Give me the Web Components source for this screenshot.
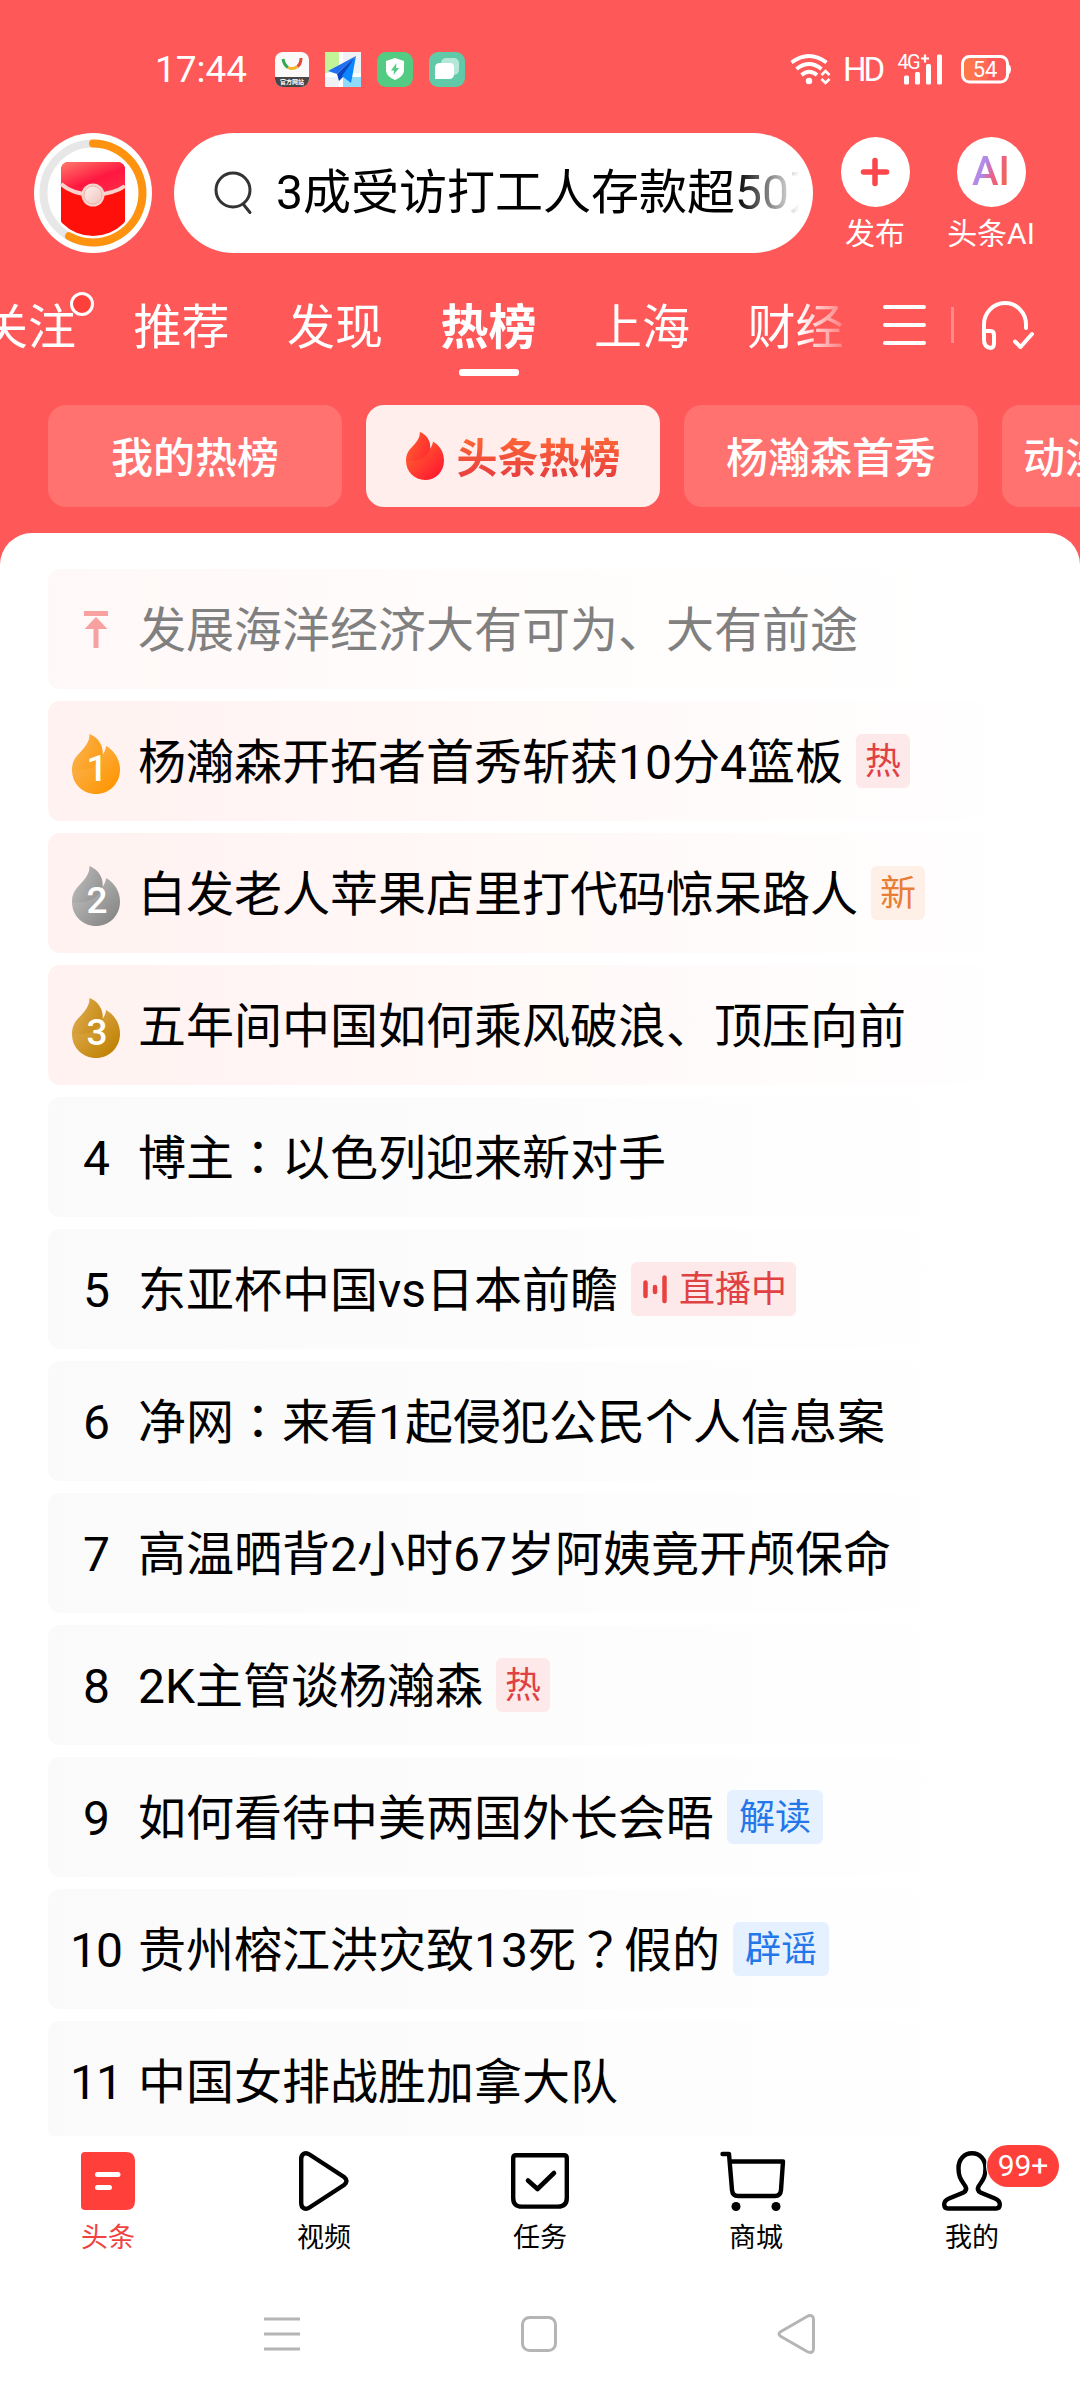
<!DOCTYPE html>
<html lang="zh-CN">
<head>
<meta charset="utf-8">
<title>头条热榜</title>
<style>
    html, body {
        margin: 0;
        padding: 0;
    }
    body {
        width: 1080px;
        height: 2400px;
        overflow: hidden;
        background-color: #FFF;
        font-family: Roboto, "Noto Sans CJK SC", sans-serif;
        color: #000;
    }
</style>
</head>
<body>
<hot-app></hot-app>

<script>
/**
 * Shared base: attaches an open shadow root and fills it
 */
class BaseElement extends HTMLElement {
    connectedCallback() {
        this.root = this.attachShadow({mode: 'open'});
        this.root.innerHTML = `<style>${this.style_}</style>${this.template}`;
    }
}

/**
 * Inline SVG icons, [width, height, markup]
 */
const ICONS = {
    store: [34, 35, `
        <clipPath id="c"><rect width="34" height="35" rx="8"/></clipPath>
        <g clip-path="url(#c)">
            <rect width="34" height="35" fill="#FAFAFA"/>
            <rect y="25" width="34" height="10" fill="#4A4545"/>
            <path d="M8 7Q9 13 13 15.500" stroke="#2FA84F" stroke-width="3" fill="none"/>
            <path d="M13 15.500Q18 18 22.500 14.500" stroke="#F2B632" stroke-width="3" fill="none"/>
            <path d="M22.500 14.500Q26 12 26 6" stroke="#E24A3B" stroke-width="3" fill="none"/>
            <text x="17" y="32" font-size="6" font-weight="700" text-anchor="middle" fill="#FFF">官方网站</text>
        </g>`],
    map: [36, 35, `
        <rect width="36" height="35" fill="#EEF2F7"/>
        <path d="M0 0H14V13L0 22Z" fill="#C1F597"/>
        <path d="M16 0V35M0 23H36" stroke="#FFF" stroke-width="4"/>
        <path d="M18 25H36V35H18Z" fill="#8EDBFC"/>
        <path d="M31 4L3 19L12 22Z" fill="#1F6FF0"/>
        <path d="M31 4L12 22L14 29L18 25Z" fill="#0B46C4"/>
        <path d="M31 4L17 24L26 31Z" fill="#0A86FF"/>`],
    shield: [36, 35, `
        <rect width="36" height="35" rx="9" fill="#53CB83"/>
        <path d="M18 6L27 9V19Q26 25 18 28Q10 25 9 19V9Z" fill="#FFF"/>
        <path d="M19.500 11L14 18.500H17L16.500 23L22 16H19Z" fill="#53CB83"/>`],
    cards: [36, 35, `
        <rect width="36" height="35" rx="9" fill="#5FC9A8"/>
        <rect x="12" y="6" width="18" height="17" rx="5" fill="#B5E7D8"/>
        <path d="M11 11H21Q25 11 25 15V22Q25 27 20 27H6V16Q6 11 11 11Z" fill="#FFF"/>`],
    wifi: [40, 31, `
        <g fill="none" stroke="#FFF" stroke-width="3.800">
            <path d="M1.500 8.500Q19 -4.500 36.500 8.500"/>
            <path d="M6.500 15Q19 5 31.500 15"/>
            <path d="M11.500 21Q19 14.500 27 21"/>
            <path d="M31.500 21L35.500 17L39.500 21M31.500 25L35.500 29L39.500 25" stroke-width="2.600"/>
        </g>
        <circle cx="19" cy="27" r="3.200" fill="#FFF"/>`],
    signal: [46, 31, `
        <g fill="#FFF">
            <rect x="7" y="21.500" width="5" height="9" rx="1.500"/>
            <rect x="18" y="18" width="5" height="12.500" rx="1.500"/>
            <rect x="29" y="10" width="5" height="20.500" rx="1.500"/>
            <rect x="40" y="0.500" width="5" height="30" rx="1.500"/>
            <text x="0.500" y="14.500" font-size="20" textLength="23">4G</text>
            <path d="M24 4.500H32M28 0.500V8.500" stroke="#FFF" stroke-width="2.200"/>
        </g>`],
    battery: [50, 29, `
        <defs><linearGradient id="g"><stop offset="0" stop-color="#FF7B45"/><stop offset="1" stop-color="#FF7B55" stop-opacity=".5"/></linearGradient></defs>
        <rect x="1.500" y="2" width="26" height="24" rx="6" fill="url(#g)"/>
        <rect x="1.500" y="1.500" width="45" height="25.500" rx="7" fill="none" stroke="#FFF" stroke-width="3"/>
        <path d="M47.500 9Q50 10.500 50 14Q50 18 47.500 19.500Z" fill="#FFF"/>
        <text x="24" y="21.500" font-size="22" text-anchor="middle" fill="#FFF">54</text>`],
    packet: [118, 120, `
        <defs>
            <linearGradient id="top" x1="0" y1="0" x2=".75" y2="1">
                <stop offset="0" stop-color="#FF7A6B"/><stop offset=".6" stop-color="#FF1740"/><stop offset="1" stop-color="#FF2A48"/>
            </linearGradient>
            <linearGradient id="seal" x1="0" y1="0" x2="1" y2="1">
                <stop offset="0" stop-color="#FFF0EC"/><stop offset="1" stop-color="#EFC5BF"/>
            </linearGradient>
            <clipPath id="cp"><circle cx="59" cy="60" r="43"/></clipPath>
        </defs>
        <ellipse cx="59" cy="60" rx="59" ry="60" fill="#FFF"/>
        <circle cx="59" cy="60" r="49.500" fill="none" stroke="#E7E7E7" stroke-width="8"/>
        <path d="M59 10.500A49.500 49.500 0 1 1 35 103.300" fill="none" stroke="#FF930F" stroke-width="8" stroke-linecap="round"/>
        <g clip-path="url(#cp)">
            <rect x="27" y="29" width="64" height="80" rx="8" fill="#FF100A"/>
            <path d="M27 51V37Q27 29 35 29H83Q91 29 91 37V51Q80 61 59 62Q38 61 27 51Z" fill="url(#top)"/>
            <path d="M27 51Q38 61 59 62Q80 61 91 53" fill="none" stroke="#F8D3CD" stroke-width="4"/>
        </g>
        <circle cx="59" cy="62" r="11.500" fill="#F7D3CC"/>
        <circle cx="59" cy="62" r="9" fill="url(#seal)" stroke="#E9B5AE" stroke-width="1"/>`],
    search: [38, 44, `
        <g fill="none" stroke="#333" stroke-width="3" stroke-linecap="round">
            <circle cx="19" cy="19" r="17"/><path d="M29.500 33.500L36 41.500"/>
        </g>`],
    plus: [30, 30, `<path d="M15 3.500V26.500M3.500 15H26.500" stroke="#F9474B" stroke-width="5.500" stroke-linecap="round"/>`],
    menu: [43, 42, `<path d="M2 3H41M2 21H41M2 39H41" stroke="#FFF" stroke-width="4" stroke-linecap="round"/>`],
    headphone: [52, 50, `
        <g fill="none" stroke="#FFF" stroke-width="4" stroke-linecap="round" stroke-linejoin="round">
            <path d="M2 30V23.500A21 21.500 0 0 1 44 23.500V27"/>
            <path d="M2 30H8.500Q12 30 12 34V42Q12 47 8.500 47Q2 46 2 39Z"/>
            <path d="M33 40.500L38.500 46L50 33"/>
        </g>`],
    flame: [48, 60, `
        <defs>
            <linearGradient id="f" x1="0" y1="0" x2=".8" y2="1">
                <stop offset="0" stop-color="var(--flame-a)"/><stop offset="1" stop-color="var(--flame-b)"/>
            </linearGradient>
            <linearGradient id="s" x1="0" y1="0" x2="1" y2="0">
                <stop offset="0" stop-color="var(--flame-b)" stop-opacity=".1"/><stop offset="1" stop-color="var(--flame-b)" stop-opacity=".5"/>
            </linearGradient>
        </defs>
        <path d="M17.500 0C27 4 31.500 12 30.500 21C32.500 18 34 15 34 12C43 17 48 26 48 35.500C48 50 37 60 24 60S0 50 0 36C0 23 8 20 13.500 12C17 7 17.500 4 17.500 0Z" fill="url(#f)"/>
        <path d="M0 36C14 38 27 33 30.500 21C31.500 12 27 4 17.500 0C17.500 4 17 7 13.500 12C8 20 0 23 0 36Z" fill="url(#s)"/>`],
    top: [24, 37, `<path d="M0 0H24V5H0ZM12 6L23.500 18H14.500V37H9.500V18H0.500Z" fill="#F9A0A1"/>`],
    live: [24, 28, `<path d="M2.500 7.500V21M12 12V17M21.500 2.500V26" stroke="#E9413F" stroke-width="4.500" stroke-linecap="round"/>`],
    home: [54, 58, `
        <path d="M4 0H45Q54 0 54 9V49Q54 58 45 58H4Q0 58 0 54V4Q0 0 4 0Z" fill="#FF403A"/>
        <path d="M16.500 22.500H37M16.500 35.500H28.500" stroke="#FFF" stroke-width="5" stroke-linecap="round"/>`],
    video: [50, 60, `<path d="M2.200 8C2.200 2.500 6.500 .800 10.500 3.500L45 26Q50 30 45 34L10.500 56.500C6.500 59.200 2.200 57.500 2.200 52Z" fill="none" stroke="#000" stroke-width="4.400"/>`],
    task: [58, 56, `
        <path d="M5 2.200H53Q55.800 2.200 55.800 5V45Q55.800 53.600 47 53.600H11Q2.200 53.600 2.200 45V5Q2.200 2.200 5 2.200Z" fill="none" stroke="#000" stroke-width="4.400"/>
        <path d="M17 27.500L26.500 36L43 20" fill="none" stroke="#000" stroke-width="4.600" stroke-linecap="round" stroke-linejoin="round"/>`],
    cart: [72, 60, `
        <g fill="none" stroke="#000" stroke-width="4.400" stroke-linecap="round" stroke-linejoin="round">
            <path d="M2.500 3H9L12 39Q12.500 45 18 45H55Q60.500 45 61 39L63 10.500H10"/>
        </g>
        <circle cx="16" cy="55.500" r="4.500"/><circle cx="56" cy="55.500" r="4.500"/>`],
    user: [60, 60, `<path d="M30 2.200C22 2.200 16.500 8.500 16.500 17C16.500 27 19.500 29 23.500 35.500Q25.500 39 21.500 41.500L7 47.500Q2.200 49.500 2.200 53.500Q2.200 57.500 6 57.500H54Q57.800 57.500 57.800 53.500Q57.800 49.500 53 47.500L38.500 41.500Q34.500 39 36.500 35.500C40.500 29 43.500 27 43.500 17C43.500 8.500 38 2.200 30 2.200Z" fill="none" stroke="#000" stroke-width="4.400"/>`],
    recent: [36, 34, `<path d="M0 2H36M0 17H36M0 32H36" stroke="#B5B5B5" stroke-width="3"/>`],
    square: [36, 36, `<rect x="1.500" y="1.500" width="33" height="33" rx="7" fill="none" stroke="#B5B5B5" stroke-width="3"/>`],
    back: [38, 40, `<path d="M30 2.500C34 .500 36.500 2 36.500 5.500V34.500C36.500 38 34 39.500 30 37.500L4 22.500Q0 20 4 17.500Z" fill="none" stroke="#B5B5B5" stroke-width="3"/>`]
};

class HotIcon extends BaseElement {
    get style_() {
        return `
            :host { display: block; flex: none; line-height: 0; }
            svg { display: block; overflow: visible; }
        `;
    }
    get template() {
        const [w, h, body] = ICONS[this.getAttribute('name')];
        const width = this.getAttribute('width') || w;
        const height = this.getAttribute('height') || h;
        return `<svg width="${width}" height="${height}" viewBox="0 0 ${w} ${h}" preserveAspectRatio="none">${body}</svg>`;
    }
}
customElements.define('hot-icon', HotIcon);

/**
 * Phone status bar
 */
class StatusBar extends BaseElement {
    get style_() {
        return `
            :host {
                display: flex;
                align-items: center;
                justify-content: space-between;
                height: 69px;
                padding: 35px 69px 0 155px;
                color: #FFF;
            }
            div { display: flex; align-items: center; }
            .time { font-size: 37px; width: 120px; line-height: 40px; }
            .apps { gap: 16px; }
            .right hot-icon:nth-of-type(1) { margin-right: 13px; }
            .hd { font-size: 33px; line-height: 40px; width: 54px; letter-spacing: -3px; }
            .right hot-icon:nth-of-type(2) { margin-right: 18px; }
        `;
    }
    get template() {
        return `
            <div>
                <span class='time'>17:44</span>
                <div class='apps'>
                    <hot-icon name='store'></hot-icon>
                    <hot-icon name='map'></hot-icon>
                    <hot-icon name='shield'></hot-icon>
                    <hot-icon name='cards'></hot-icon>
                </div>
            </div>
            <div class='right'>
                <hot-icon name='wifi'></hot-icon>
                <span class='hd'>HD</span>
                <hot-icon name='signal'></hot-icon>
                <hot-icon name='battery'></hot-icon>
            </div>
        `;
    }
}
customElements.define('status-bar', StatusBar);

/**
 * Round button with a caption under it
 */
class RoundAction extends BaseElement {
    get style_() {
        return `
            :host { display: flex; flex-direction: column; align-items: center; width: 116px; color: #FFF; }
            .circle {
                display: flex;
                align-items: center;
                justify-content: center;
                width: 69px;
                height: 70px;
                border-radius: 50%;
                background-color: #FFF;
            }
            .label { margin-top: 9px; font-size: 30px; line-height: 36px; white-space: nowrap; }
        `;
    }
    get template() {
        return `
            <div class='circle'><slot></slot></div>
            <div class='label'>${this.getAttribute('label')}</div>
        `;
    }
}
customElements.define('round-action', RoundAction);

/**
 * Red packet, search box and actions
 */
class SearchHeader extends BaseElement {
    get style_() {
        return `
            :host { display: flex; height: 120px; padding: 29px 0 0 34px; }
            .box {
                display: flex;
                align-items: center;
                box-sizing: border-box;
                width: 639px;
                height: 120px;
                margin-left: 22px;
                padding: 0 14px 0 40px;
                border-radius: 60px;
                background-color: #FFF;
            }
            .query {
                flex: 1;
                margin-left: 24px;
                font-size: 48px;
                line-height: 60px;
                white-space: nowrap;
                overflow: hidden;
                -webkit-mask-image: linear-gradient(to right, #000 460px, transparent 524px);
                mask-image: linear-gradient(to right, #000 460px, transparent 524px);
            }
            .actions { display: flex; padding-top: 4px; margin-left: 4px; }
            .ai {
                font-size: 40px;
                line-height: 44px;
                font-weight: 500;
                background: linear-gradient(110deg, #F57BC0 10%, #A78DF0 32%, #EC5F8A 55%, #F0694A 90%);
                -webkit-background-clip: text;
                background-clip: text;
                color: transparent;
            }
        `;
    }
    get template() {
        return `
            <hot-icon name='packet'></hot-icon>
            <div class='box'>
                <hot-icon name='search'></hot-icon>
                <div class='query'>3成受访打工人存款超50万</div>
            </div>
            <div class='actions'>
                <round-action label='发布'><hot-icon name='plus'></hot-icon></round-action>
                <round-action label='头条AI'><span class='ai'>AI</span></round-action>
            </div>
        `;
    }
}
customElements.define('search-header', SearchHeader);

/**
 * Channel tabs
 */
class ChannelTabs extends BaseElement {
    get style_() {
        return `
            :host { display: flex; height: 129px; margin-top: 12px; color: #FFF; }
            .scroll {
                display: flex;
                gap: 57.500px;
                width: 848px;
                overflow: hidden;
                -webkit-mask-image: linear-gradient(to right, #000 800px, transparent 856px);
                mask-image: linear-gradient(to right, #000 800px, transparent 856px);
            }
            .tab {
                position: relative;
                flex: none;
                padding-top: 33px;
                font-size: 48px;
                line-height: 60px;
            }
            .tab:first-child { margin-left: -20px; }
            .active { font-weight: 700; }
            .active::after {
                content: '';
                display: block;
                width: 60px;
                height: 7px;
                margin: 11px auto 0;
                border-radius: 3px;
                background-color: #FFF;
            }
            .dot {
                position: absolute;
                right: -18px;
                top: 27px;
                width: 18px;
                height: 18px;
                border: 3px solid #FFF;
                border-radius: 50%;
                background-color: #FF403A;
            }
            .tools { display: flex; padding-top: 39px; margin-left: 35px; }
            .line { width: 3px; height: 36px; margin: 3px 28px 0 25px; background-color: rgba(255, 255, 255, .3); }
            .tools hot-icon:last-child { margin-top: -3px; }
        `;
    }
    get template() {
        return `
            <div class='scroll'>
                <div class='tab'>关注<span class='dot'></span></div>
                <div class='tab'>推荐</div>
                <div class='tab'>发现</div>
                <div class='tab active'>热榜</div>
                <div class='tab'>上海</div>
                <div class='tab'>财经</div>
            </div>
            <div class='tools'>
                <hot-icon name='menu'></hot-icon>
                <div class='line'></div>
                <hot-icon name='headphone'></hot-icon>
            </div>
        `;
    }
}
customElements.define('channel-tabs', ChannelTabs);

/**
 * Board chip, the selected one carries a flame
 */
class BoardChip extends BaseElement {
    get style_() {
        return `
            :host {
                --flame-a: #FF7A30;
                --flame-b: #FF1730;
                display: flex;
                flex: none;
                align-items: center;
                justify-content: center;
                box-sizing: border-box;
                width: 294px;
                height: 102px;
                border-radius: 18px;
                background-color: #FF7270;
                color: #FFF;
                font-size: 42px;
                font-weight: 500;
                line-height: 60px;
                white-space: nowrap;
            }
            .text { padding-top: 5px; }
            :host([selected]) { background-color: #FFEEEC; font-size: 41px; font-weight: 700; }
            :host([selected]) .text {
                margin-left: 13px;
                background: linear-gradient(to bottom, #FF6A35 15%, #E8403F 80%);
                -webkit-background-clip: text;
                background-clip: text;
                color: transparent;
            }
        `;
    }
    get template() {
        const flame = this.hasAttribute('selected') ? `<hot-icon name='flame' width='38' height='48'></hot-icon>` : '';
        return `${flame}<span class='text'><slot></slot></span>`;
    }
}
customElements.define('board-chip', BoardChip);

/**
 * Small label after a title
 */
class HotTag extends BaseElement {
    get style_() {
        return `
            :host {
                display: flex;
                flex: none;
                align-items: center;
                box-sizing: border-box;
                height: 54px;
                margin-left: 13px;
                padding: 2px 9px 0;
                border-radius: 6px;
                font-size: 36px;
                line-height: 50px;
                color: #E04143;
                background-color: #FDE9EA;
            }
            :host([type=new]) { color: #E87D35; background-color: #FFF0E7; }
            :host([type=info]) { padding: 2px 12px 0; color: #2377E8; background-color: #E6F1FF; }
            :host([type=live]) { padding: 2px 9px 0 12px; }
            hot-icon { margin: -2px 12px 0 0; }
        `;
    }
    get template() {
        const live = this.getAttribute('type') === 'live' ? `<hot-icon name='live'></hot-icon>` : '';
        return `${live}<slot></slot>`;
    }
}
customElements.define('hot-tag', HotTag);

/**
 * One line of the board
 */
class HotRow extends BaseElement {
    get style_() {
        return `
            :host {
                display: flex;
                flex: none;
                align-items: center;
                height: 120px;
                padding-left: 6px;
                border-radius: 12px;
                background: linear-gradient(to right, #FAFAFA, #FFF);
                font-size: 48px;
                line-height: 60px;
                white-space: nowrap;
            }
            :host([rank="1"]), :host([rank="2"]), :host([rank="3"]) {
                background: linear-gradient(to right, #FFF2F1, #FFF9F8 50%, #FFF);
            }
            :host([rank="1"]) { --flame-a: #F8BD6C; --flame-b: #FF9500; }
            :host([rank="2"]) { --flame-a: #CFCFCF; --flame-b: #858585; }
            :host([rank="3"]) { --flame-a: #E9BB6C; --flame-b: #BF7F00; }
            :host([rank=top]) { background: linear-gradient(to right, #FFF8F8, #FFFDFC 50%, #FFF); }
            :host([rank=top]) .title { color: #808080; }
            .rank { display: grid; place-items: center; width: 84px; }
            .rank > * { grid-area: 1 / 1; }
            .num { padding-top: 4px; letter-spacing: -1px; }
            .medal { padding: 15px 0 0 2px; font-size: 37px; line-height: 50px; font-weight: 500; color: #FFF; z-index: 1; }
            .flame { margin-top: 6px; }
            .title { padding-top: 4px; }
            .mark { font-family: "Noto Sans CJK TC", sans-serif; line-height: 0; }
        `;
    }
    get template() {
        const rank = this.getAttribute('rank');
        // full-width colon and question mark sit in the middle of their cell
        const title = this.getAttribute('title-text').replace(/[：？]/g, `<span class='mark' lang='zh-TW'>$&</span>`);
        let mark = `<span class='num'>${rank}</span>`;
        if (rank === 'top') {
            mark = `<hot-icon name='top'></hot-icon>`;
        } else if (rank <= 3) {
            mark = `<hot-icon class='flame' name='flame'></hot-icon><span class='medal'>${rank}</span>`;
        }
        return `
            <div class='rank'>${mark}</div>
            <div class='title'>${title}</div>
            <slot></slot>
        `;
    }
}
customElements.define('hot-row', HotRow);

/**
 * The white sheet with the rows
 */
class HotList extends BaseElement {
    get style_() {
        return `
            :host {
                display: flex;
                flex-direction: column;
                gap: 12px;
                box-sizing: border-box;
                height: 1603px;
                padding: 36px 48px 0;
                border-radius: 32px 32px 0 0;
                background-color: #FFF;
                overflow: hidden;
            }
        `;
    }
    get template() {
        return `
            <hot-row rank='top' title-text='发展海洋经济大有可为、大有前途'></hot-row>
            <hot-row rank='1' title-text='杨瀚森开拓者首秀斩获10分4篮板'><hot-tag>热</hot-tag></hot-row>
            <hot-row rank='2' title-text='白发老人苹果店里打代码惊呆路人'><hot-tag type='new'>新</hot-tag></hot-row>
            <hot-row rank='3' title-text='五年间中国如何乘风破浪、顶压向前'></hot-row>
            <hot-row rank='4' title-text='博主：以色列迎来新对手'></hot-row>
            <hot-row rank='5' title-text='东亚杯中国vs日本前瞻'><hot-tag type='live'>直播中</hot-tag></hot-row>
            <hot-row rank='6' title-text='净网：来看1起侵犯公民个人信息案'></hot-row>
            <hot-row rank='7' title-text='高温晒背2小时67岁阿姨竟开颅保命'></hot-row>
            <hot-row rank='8' title-text='2K主管谈杨瀚森'><hot-tag>热</hot-tag></hot-row>
            <hot-row rank='9' title-text='如何看待中美两国外长会晤'><hot-tag type='info'>解读</hot-tag></hot-row>
            <hot-row rank='10' title-text='贵州榕江洪灾致13死？假的'><hot-tag type='info'>辟谣</hot-tag></hot-row>
            <hot-row rank='11' title-text='中国女排战胜加拿大队'></hot-row>
        `;
    }
}
customElements.define('hot-list', HotList);

/**
 * Bottom tab item
 */
class TabItem extends BaseElement {
    get style_() {
        return `
            :host { display: flex; flex-direction: column; align-items: center; flex: 1; font-size: 27px; line-height: 34px; }
            :host([active]) { color: #F0433F; }
            .icon { position: relative; display: flex; align-items: center; height: 60px; }
            .label { margin-top: 10px; }
            .badge {
                position: absolute;
                left: 45px;
                top: -6px;
                width: 72px;
                height: 42px;
                border-radius: 21px;
                background-color: #FF403A;
                box-shadow: 0 0 0 1px #FFF;
                color: #FFF;
                font-size: 30px;
                line-height: 42px;
                text-align: center;
            }
        `;
    }
    get template() {
        const badge = this.getAttribute('badge');
        return `
            <div class='icon'>
                <hot-icon name='${this.getAttribute('icon')}'></hot-icon>
                ${badge ? `<span class='badge'>${badge}</span>` : ''}
            </div>
            <div class='label'><slot></slot></div>
        `;
    }
}
customElements.define('tab-item', TabItem);

/**
 * The whole page
 */
class HotApp extends BaseElement {
    get style_() {
        return `
            :host { display: flex; flex-direction: column; width: 1080px; height: 2400px; background-color: #FFF; overflow: hidden; }
            .head { background-color: #FF5858; height: 533px; }
            .chips { display: flex; gap: 24px; padding: 11px 0 0 48px; overflow: hidden; }
            .body { background: linear-gradient(to bottom, #FF5858 40px, #FFF 40px); }
            .tabs { display: flex; padding-top: 15px; height: 133px; }
            .system { display: flex; align-items: center; gap: 220.500px; height: 100px; padding-left: 264px; }
        `;
    }
    get template() {
        return `
            <div class='head'>
                <status-bar></status-bar>
                <search-header></search-header>
                <channel-tabs></channel-tabs>
                <div class='chips'>
                    <board-chip>我的热榜</board-chip>
                    <board-chip selected>头条热榜</board-chip>
                    <board-chip>杨瀚森首秀</board-chip>
                    <board-chip style='justify-content: flex-start; padding-left: 21px'>动漫榜</board-chip>
                </div>
            </div>
            <div class='body'><hot-list></hot-list></div>
            <div class='tabs'>
                <tab-item icon='home' active>头条</tab-item>
                <tab-item icon='video'>视频</tab-item>
                <tab-item icon='task'>任务</tab-item>
                <tab-item icon='cart'>商城</tab-item>
                <tab-item icon='user' badge='99+'>我的</tab-item>
            </div>
            <div class='system'>
                <hot-icon name='recent'></hot-icon>
                <hot-icon name='square'></hot-icon>
                <hot-icon name='back'></hot-icon>
            </div>
        `;
    }
}
customElements.define('hot-app', HotApp);
</script>
</body>
</html>
